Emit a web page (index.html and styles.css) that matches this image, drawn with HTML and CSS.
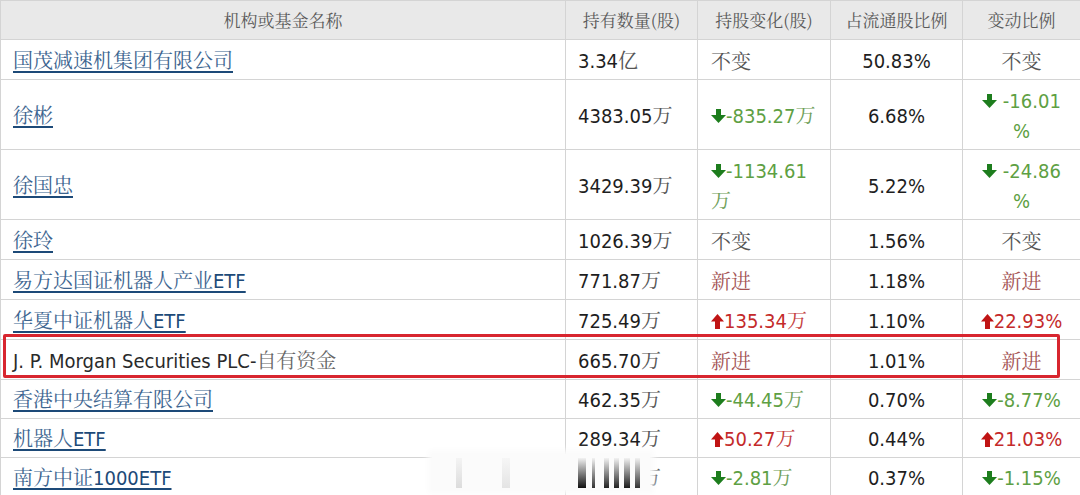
FILE: index.html
```html
<!DOCTYPE html>
<html lang="zh-CN">
<head>
<meta charset="utf-8">
<title>十大流通股东</title>
<link rel="stylesheet" href="styles.css">
</head>
<body>
<div class="wrap">
<table class="holders">
  <colgroup>
    <col class="c-name"><col class="c-qty"><col class="c-chg"><col class="c-ratio"><col class="c-pct">
  </colgroup>
  <thead>
    <tr><th>机构或基金名称</th><th>持有数量(股)</th><th>持股变化(股)</th><th>占流通股比例</th><th>变动比例</th></tr>
  </thead>
  <tbody>
    <tr>
      <td class="name"><a class="lk">国茂减速机集团有限公司</a></td>
      <td class="qty">3.34<span class="cn">亿</span></td>
      <td class="chg same">不变</td>
      <td class="ratio">50.83%</td>
      <td class="pct same">不变</td>
    </tr>
    <tr>
      <td class="name"><a class="lk">徐彬</a></td>
      <td class="qty">4383.05<span class="cn">万</span></td>
      <td class="chg down"><svg class="arr" viewBox="0 0 15 15"><rect x="5" y="0" width="5" height="7"/><polygon points="0,6 15,6 7.5,14"/></svg>-835.27<span class="cn">万</span></td>
      <td class="ratio">6.68%</td>
      <td class="pct down"><svg class="arr" viewBox="0 0 15 15"><rect x="5" y="0" width="5" height="7"/><polygon points="0,6 15,6 7.5,14"/></svg> -16.01<br>%</td>
    </tr>
    <tr>
      <td class="name"><a class="lk">徐国忠</a></td>
      <td class="qty">3429.39<span class="cn">万</span></td>
      <td class="chg down"><svg class="arr" viewBox="0 0 15 15"><rect x="5" y="0" width="5" height="7"/><polygon points="0,6 15,6 7.5,14"/></svg>-1134.61<br><span class="cn">万</span></td>
      <td class="ratio">5.22%</td>
      <td class="pct down"><svg class="arr" viewBox="0 0 15 15"><rect x="5" y="0" width="5" height="7"/><polygon points="0,6 15,6 7.5,14"/></svg> -24.86<br>%</td>
    </tr>
    <tr>
      <td class="name"><a class="lk">徐玲</a></td>
      <td class="qty">1026.39<span class="cn">万</span></td>
      <td class="chg same">不变</td>
      <td class="ratio">1.56%</td>
      <td class="pct same">不变</td>
    </tr>
    <tr>
      <td class="name"><a class="lk">易方达国证机器人产业<span class="en">ETF</span></a></td>
      <td class="qty">771.87<span class="cn">万</span></td>
      <td class="chg new">新进</td>
      <td class="ratio">1.18%</td>
      <td class="pct new">新进</td>
    </tr>
    <tr>
      <td class="name"><a class="lk">华夏中证机器人<span class="en">ETF</span></a></td>
      <td class="qty">725.49<span class="cn">万</span></td>
      <td class="chg up"><svg class="arr up-a" viewBox="0 0 13 15"><polygon points="6.5,0 13,7.5 0,7.5"/><rect x="4" y="7" width="5" height="8"/></svg>135.34<span class="cn">万</span></td>
      <td class="ratio">1.10%</td>
      <td class="pct up"><svg class="arr up-a" viewBox="0 0 13 15"><polygon points="6.5,0 13,7.5 0,7.5"/><rect x="4" y="7" width="5" height="8"/></svg>22.93%</td>
    </tr>
    <tr>
      <td class="name"><span class="plain">J. P. Morgan Securities PLC-<span class="cn">自有资金</span></span></td>
      <td class="qty">665.70<span class="cn">万</span></td>
      <td class="chg new">新进</td>
      <td class="ratio">1.01%</td>
      <td class="pct new">新进</td>
    </tr>
    <tr class="tight">
      <td class="name"><a class="lk">香港中央结算有限公司</a></td>
      <td class="qty">462.35<span class="cn">万</span></td>
      <td class="chg down"><svg class="arr" viewBox="0 0 15 15"><rect x="5" y="0" width="5" height="7"/><polygon points="0,6 15,6 7.5,14"/></svg>-44.45<span class="cn">万</span></td>
      <td class="ratio">0.70%</td>
      <td class="pct down"><svg class="arr" viewBox="0 0 15 15"><rect x="5" y="0" width="5" height="7"/><polygon points="0,6 15,6 7.5,14"/></svg>-8.77%</td>
    </tr>
    <tr class="tight">
      <td class="name"><a class="lk">机器人<span class="en">ETF</span></a></td>
      <td class="qty">289.34<span class="cn">万</span></td>
      <td class="chg up"><svg class="arr up-a" viewBox="0 0 13 15"><polygon points="6.5,0 13,7.5 0,7.5"/><rect x="4" y="7" width="5" height="8"/></svg>50.27<span class="cn">万</span></td>
      <td class="ratio">0.44%</td>
      <td class="pct up"><svg class="arr up-a" viewBox="0 0 13 15"><polygon points="6.5,0 13,7.5 0,7.5"/><rect x="4" y="7" width="5" height="8"/></svg>21.03%</td>
    </tr>
    <tr class="tight">
      <td class="name"><a class="lk">南方中证<span class="en">1000ETF</span></a></td>
      <td class="qty">231.60<span class="cn">万</span></td>
      <td class="chg down"><svg class="arr" viewBox="0 0 15 15"><rect x="5" y="0" width="5" height="7"/><polygon points="0,6 15,6 7.5,14"/></svg>-2.81<span class="cn">万</span></td>
      <td class="ratio">0.37%</td>
      <td class="pct down"><svg class="arr" viewBox="0 0 15 15"><rect x="5" y="0" width="5" height="7"/><polygon points="0,6 15,6 7.5,14"/></svg>-1.15%</td>
    </tr>
  </tbody>
</table>
<div class="highlight"></div>
<div class="watermark">
  <span class="wb wb-f1"></span><span class="wb wb-f2"></span>
  <span class="wb wb-d1"></span><span class="wb wb-d2"></span><span class="wb wb-d3"></span>
  <span class="wb wb-d4"></span><span class="wb wb-d5"></span><span class="wb wb-d6"></span>
</div>
</div>
</body>
</html>
```
FILE: styles.css
```css
html, body {
  margin: 0;
  padding: 0;
  background: #ffffff;
}
body {
  width: 1080px;
  height: 495px;
  overflow: hidden;
  font-family: "DejaVu Sans Condensed", "Noto Serif CJK SC", "Noto Sans CJK SC", sans-serif;
  font-size: 20px;
  color: #222;
}
.wrap {
  position: relative;
  width: 1080px;
}
.holders {
  border-collapse: collapse;
  table-layout: fixed;
  width: 1080px;
}
.c-name { width: 565px; }
.c-qty { width: 132px; }
.c-chg { width: 133px; }
.c-ratio { width: 132px; }
.c-pct { width: 118px; }

.holders th,
.holders td {
  border: 1px solid #d4d4d4;
}
.holders th {
  height: 38px;
  padding: 0;
  background: #e9e9e9;
  font-family: "Noto Serif CJK SC", "Noto Sans CJK SC", sans-serif;
  font-weight: normal;
  font-size: 17px;
  line-height: 20px;
  color: #5a5a5a;
  text-align: center;
}
.holders td {
  padding: 6px 12px 3px;
  line-height: 30px;
  white-space: nowrap;
  vertical-align: middle;
}
.holders .tight td {
  padding-top: 5px;
}
.cn, .lk, .en, .plain, .arr {
  line-height: 20px;
}
.cn {
  font-family: "Noto Serif CJK SC", "Noto Sans CJK SC", sans-serif;
  color: #555;
}
.name {
  padding-left: 12px;
}
.lk {
  font-family: "Noto Serif CJK SC", "Noto Sans CJK SC", sans-serif;
  color: #3d6590;
  text-decoration: underline;
  text-decoration-color: #1d4a78;
  text-underline-offset: 3px;
}
.lk .en {
  font-family: "DejaVu Sans Condensed", sans-serif;
  color: #1d4a78;
}
.plain {
  color: #2a2a2a;
}
.plain .cn {
  color: #666;
}
.qty {
  text-align: left;
  color: #1e1e1e;
}
.holders td.chg {
  padding-left: 13px;
  text-align: left;
}
.ratio {
  text-align: center;
  color: #1e1e1e;
}
.holders td.pct {
  text-align: center;
  padding-left: 8px;
  padding-right: 8px;
}
.same {
  font-family: "Noto Serif CJK SC", "Noto Sans CJK SC", sans-serif;
  color: #555;
}
.new {
  font-family: "Noto Serif CJK SC", "Noto Sans CJK SC", sans-serif;
  color: #a45454;
}
.down {
  color: #5ea043;
}
.down .cn {
  color: #6fa05a;
}
.up {
  color: #c42a2a;
}
.up .cn {
  color: #c44040;
}
.arr {
  width: 15px;
  height: 15px;
  vertical-align: -1px;
  fill: #1d7d1d;
}
.arr.up-a {
  width: 13px;
  fill: #c01414;
}

.highlight {
  position: absolute;
  left: 3px;
  top: 334px;
  width: 1051px;
  height: 38px;
  border: 3px solid #d8262f;
  border-radius: 2px;
}

.watermark {
  position: absolute;
  left: 432px;
  top: 454px;
  width: 218px;
  height: 36px;
  background: #fbfbfb;
  box-shadow: 0 0 6px 4px #fbfbfb;
}
.wb {
  position: absolute;
  bottom: 2px;
  height: 30px;
}
.wb-f1 { left: 24px; width: 6px; background: linear-gradient(#f4f4f4, #dcdcdc); }
.wb-f2 { left: 70px; width: 8px; background: linear-gradient(#f6f6f6, #e4e4e4); }
.wb-d1 { left: 146px; width: 8px; background: linear-gradient(#f2f2f2, #111); }
.wb-d2 { left: 160px; width: 3px; background: linear-gradient(#f2f2f2, #333); }
.wb-d3 { left: 172px; width: 5px; background: linear-gradient(#f2f2f2, #222); }
.wb-d4 { left: 182px; width: 5px; background: linear-gradient(#f2f2f2, #222); }
.wb-d5 { left: 192px; width: 6px; background: linear-gradient(#f2f2f2, #1a1a1a); }
.wb-d6 { left: 203px; width: 5px; background: linear-gradient(#f2f2f2, #333); }
```
